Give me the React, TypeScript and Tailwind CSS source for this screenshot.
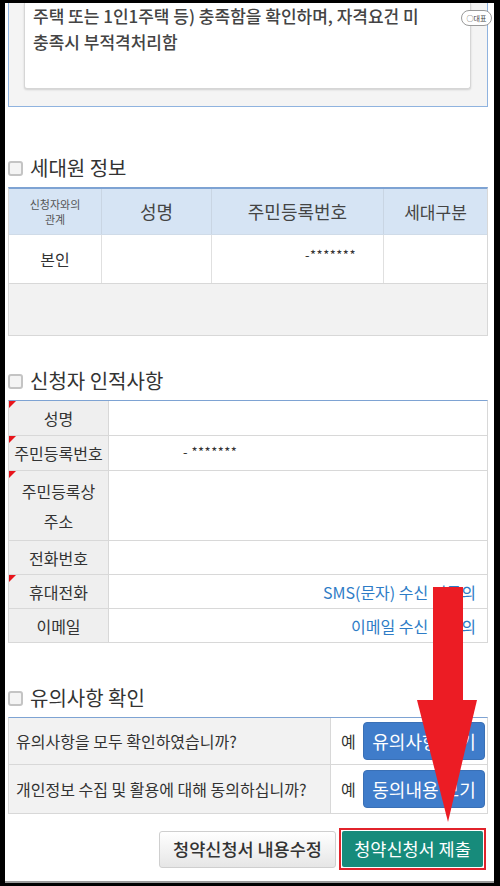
import React from "react";

const font = { fontFamily: '"Noto Sans CJK KR", "Noto Sans", sans-serif' };

function Check() {
  return <span className="inline-block w-[15px] h-[15px] rounded-[3px] border-2 border-[#c4c4c4] bg-[#f4f4f4] mr-[7px] shrink-0" />;
}

function Heading({ children }: { children: React.ReactNode }) {
  return (
    <div className="h-[28px] flex items-center text-[20px] text-[#333] leading-none">
      <Check />
      <span>{children}</span>
    </div>
  );
}

function Tri() {
  return (
    <span className="absolute left-0 top-0 w-0 h-0 border-t-[7px] border-t-[#e8141b] border-r-[7px] border-r-transparent" />
  );
}

function InfoRow({
  label,
  h,
  req,
  children,
}: {
  label: React.ReactNode;
  h: string;
  req?: boolean;
  children?: React.ReactNode;
}) {
  return (
    <div className={`flex border-b border-[#d8d8d8] ${h}`}>
      <div className="relative w-[100px] shrink-0 bg-[#efefef] border-r border-[#d8d8d8] flex items-center justify-center text-center text-[16px] text-[#333] leading-[30px]">
        {req && <Tri />}
        {label}
      </div>
      <div className="flex-1 flex items-center bg-white text-[16px]">{children}</div>
    </div>
  );
}

export default function App() {
  return (
    <div className="w-[500px] h-[886px] bg-black relative overflow-hidden pt-[3px] pl-[5px]" style={font}>
      <div className="w-[489px] h-[880px] bg-white overflow-hidden pl-[3px] border-b-2 border-[#9a9a9a]">
        <div className="w-[480px]">
          {/* top notice box */}
          <div className="border-x border-b border-[#8fb3df] bg-[#f4f4f4] h-[104px] pl-[15px] pr-[16px]">
            <div className="bg-white h-[86px] border-x border-b border-[#d6d6d6] rounded-b-[3px] shadow-[0_1px_2px_rgba(0,0,0,0.15)] pl-[8px] text-[17px] leading-[26px] text-[#444] font-medium">
              <div>주택 또는 1인1주택 등) 충족함을 확인하며, 자격요건 미</div>
              <div>충족시 부적격처리함</div>
            </div>
          </div>

          {/* 세대원 정보 */}
          <div className="mt-[47px]">
            <Heading>세대원 정보</Heading>
          </div>
          <div className="mt-[5px] border-t-2 border-[#7ea3d3] border-x border-x-[#d8d8d8]">
            <div className="flex h-[46px] bg-[#d6e4f4] text-[#444] border-b border-[#cfdbe8]">
              <div className="w-[93px] flex flex-col items-center justify-center text-center text-[11px] leading-[15px] border-r border-[#c9d5e3] text-[#555]">
                <span>신청자와의</span>
                <span>관계</span>
              </div>
              <div className="w-[110px] flex items-center justify-center text-[18px] border-r border-[#c9d5e3]">성명</div>
              <div className="w-[172px] flex items-center justify-center text-[18px] border-r border-[#c9d5e3]">주민등록번호</div>
              <div className="flex-1 flex items-center justify-center text-[17px]">세대구분</div>
            </div>
            <div className="flex h-[49px] bg-white text-[#333] border-b border-[#d8d8d8]">
              <div className="w-[93px] flex items-center justify-center text-[16px] border-r border-[#e0e0e0]">본인</div>
              <div className="w-[110px] border-r border-[#e0e0e0]" />
              <div className="w-[172px] flex items-start justify-end pr-[27px] pt-[10px] text-[13px] tracking-[0.5px] border-r border-[#e0e0e0]">
                -*******
              </div>
              <div className="flex-1" />
            </div>
            <div className="h-[52px] bg-[#f2f2f2] border-b border-[#d8d8d8]" />
          </div>

          {/* 신청자 인적사항 */}
          <div className="mt-[31px]">
            <Heading>신청자 인적사항</Heading>
          </div>
          <div className="mt-[5px] border-t border-[#7ea3d3] border-x border-x-[#d8d8d8]">
            <InfoRow label="성명" h="h-[35px]" req />
            <InfoRow label="주민등록번호" h="h-[35px]" req>
              <span className="pl-[74px] pb-[3px] text-[13px] text-[#333] tracking-[0.5px]">- *******</span>
            </InfoRow>
            <InfoRow
              label={
                <span>
                  주민등록상
                  <br />
                  주소
                </span>
              }
              h="h-[70px]"
              req
            />
            <InfoRow label="전화번호" h="h-[34px]" />
            <InfoRow label="휴대전화" h="h-[34px]" req>
              <span className="ml-auto pr-[11px] text-[#2e7cc6]">SMS(문자) 수신 미동의</span>
            </InfoRow>
            <InfoRow label="이메일" h="h-[34px]">
              <span className="ml-auto pr-[11px] text-[#2e7cc6]">이메일 수신 미동의</span>
            </InfoRow>
          </div>

          {/* 유의사항 확인 */}
          <div className="mt-[41px]">
            <Heading>유의사항 확인</Heading>
          </div>
          <div className="mt-[5px] border-t border-[#7ea3d3] border-x border-x-[#d8d8d8]">
            {[
              ["유의사항을 모두 확인하였습니까?", "유의사항 보기", "h-[47px]"],
              ["개인정보 수집 및 활용에 대해 동의하십니까?", "동의내용 보기", "h-[49px]"],
            ].map(([q, b, h]) => (
              <div key={q} className={`flex border-b border-[#d8d8d8] ${h}`}>
                <div className="w-[322px] bg-[#f2f2f2] border-r border-[#d8d8d8] flex items-center pl-[7px] text-[16px] text-[#333]">
                  {q}
                </div>
                <div className="flex-1 flex items-center bg-white pl-[10px]">
                  <span className="text-[16px] text-[#333] w-[22px]">예</span>
                  <span className="w-[122px] h-[38px] rounded-[4px] bg-[#3f7cca] border border-[#3a70b6] text-white text-[18px] flex items-center justify-center">
                    {b}
                  </span>
                </div>
              </div>
            ))}
          </div>

          {/* buttons */}
          <div className="mt-[14px] flex justify-end items-center gap-[3px] pr-[2px]">
            <span className="w-[177px] h-[37px] rounded-[3px] border border-[#cfcfcf] bg-gradient-to-b from-[#ffffff] to-[#e6e6e6] text-[#333] text-[17.5px] font-medium flex items-center justify-center">
              청약신청서 내용수정
            </span>
            <span className="w-[147px] h-[42px] border-2 border-[#e1232b] p-[1px] flex">
              <span className="flex-1 bg-[#178b7b] text-white text-[17.5px] flex items-center justify-center rounded-[2px]">
                청약신청서 제출
              </span>
            </span>
          </div>
        </div>
      </div>

      {/* 대표 pill */}
      <div className="absolute left-[461px] top-[10px] w-[31px] h-[16px] rounded-full border border-[#9a9a9a] bg-white flex items-center justify-center text-[7px] text-[#444] leading-none">
        ○대표
      </div>

      {/* red arrow */}
      <svg className="absolute left-0 top-0" width="500" height="886" viewBox="0 0 500 886">
        <rect x="433" y="587" width="30" height="115" fill="#ec1c24" />
        <polygon points="417,700 477,700 448,822" fill="#ec1c24" />
      </svg>
    </div>
  );
}
